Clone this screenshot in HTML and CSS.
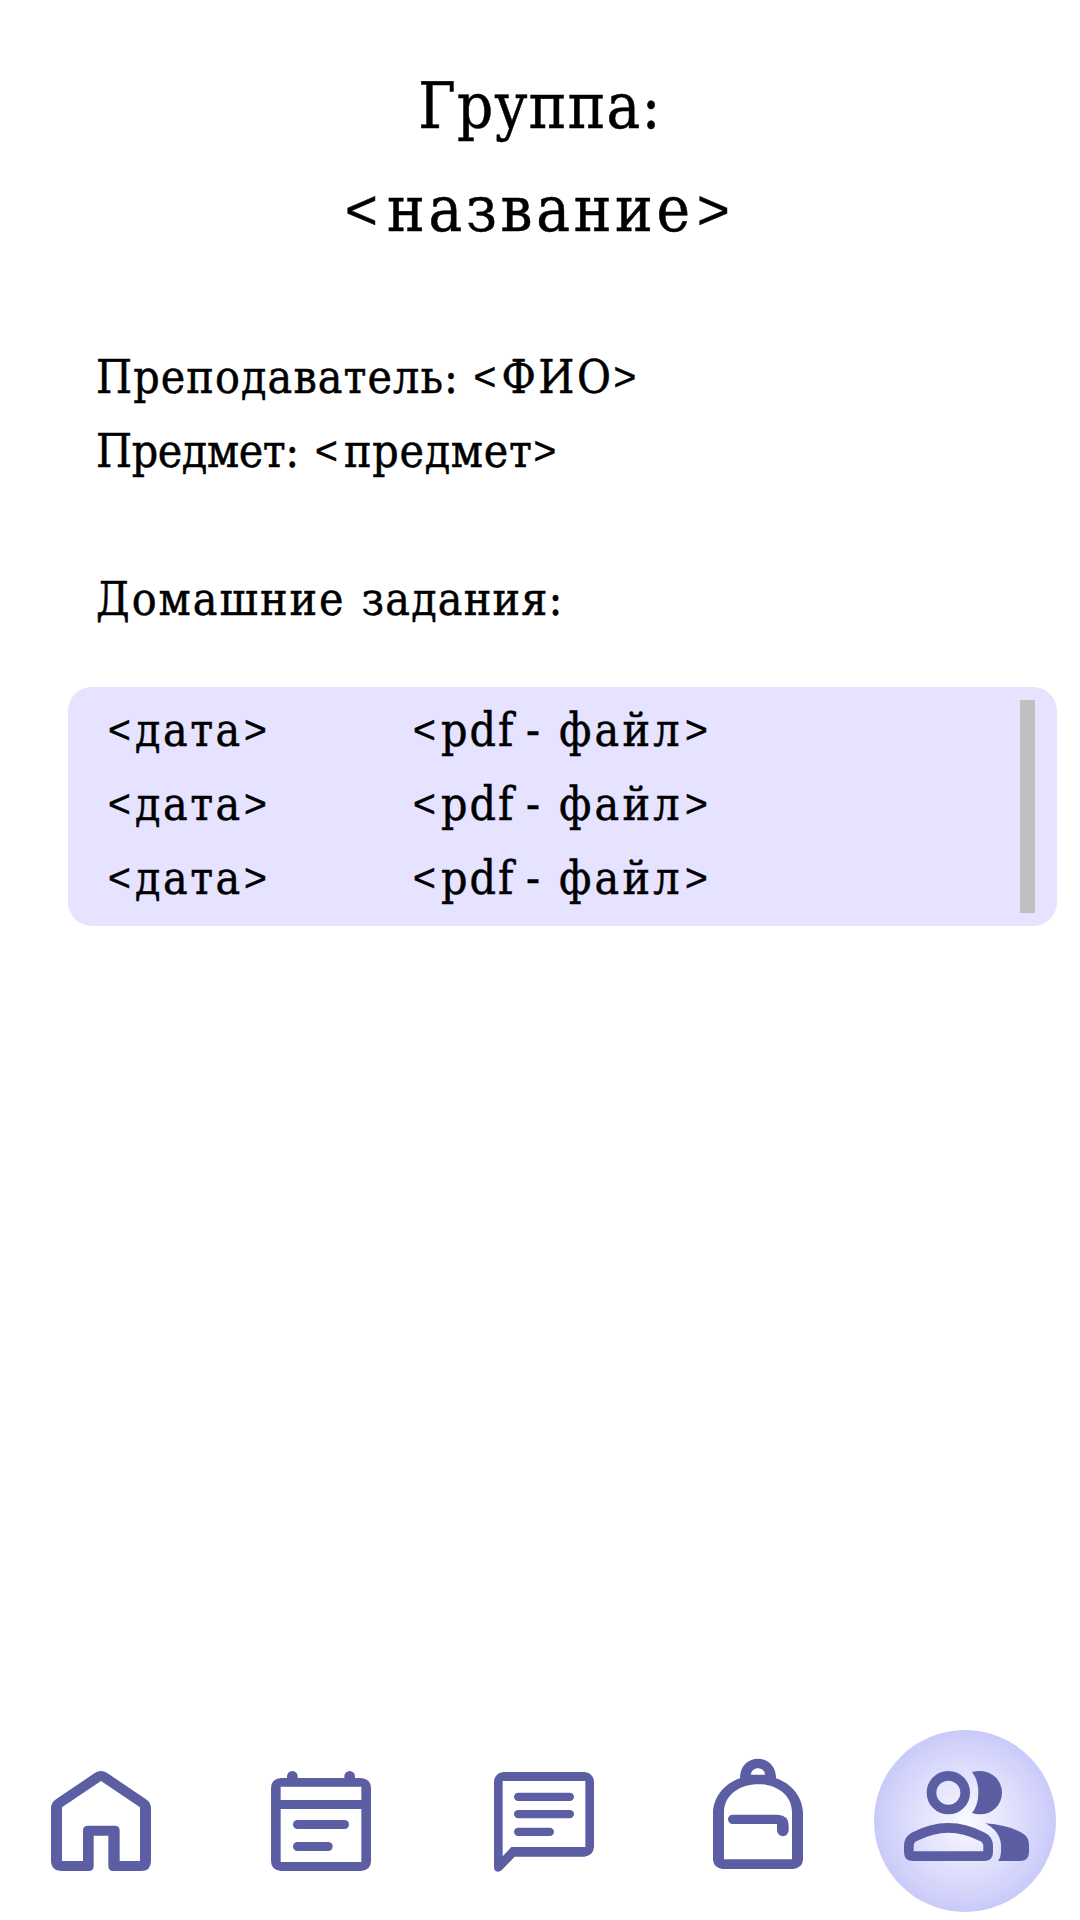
FILE: index.html
```
<!DOCTYPE html>
<html lang="ru">
<head>
<meta charset="utf-8">
<title>Группа</title>
<link rel="stylesheet" href="styles.css">
</head>
<body>
<main class="content">
  <h1 class="title">
    <span class="title-line"><span class="title-label">Группа:</span></span>
    <span class="title-line"><span class="chev">&lt;</span><span class="title-name">название</span><span class="chev">&gt;</span></span>
  </h1>
  <section class="info">
    <p class="line"><span class="teacher-label">Преподаватель:</span><span class="chev">&lt;</span><span class="teacher-name">ФИО</span><span class="chev">&gt;</span></p>
    <p class="line"><span class="subject-label">Предмет:</span><span class="chev">&lt;</span><span class="subject-name">предмет</span><span class="chev">&gt;</span></p>
  </section>
  <h2 class="line homework-title"><span class="homework-first">Домашние</span><span class="homework-second">задания:</span></h2>
  <section class="card">
    <ul class="list">
      <li class="line"><span class="date"><span class="chev">&lt;</span><span class="date-text">дата</span><span class="chev">&gt;</span></span><span class="chev">&lt;</span><span class="pdf">pdf</span><span class="dash">-</span><span class="file">файл</span><span class="chev">&gt;</span></li>
      <li class="line"><span class="date"><span class="chev">&lt;</span><span class="date-text">дата</span><span class="chev">&gt;</span></span><span class="chev">&lt;</span><span class="pdf">pdf</span><span class="dash">-</span><span class="file">файл</span><span class="chev">&gt;</span></li>
      <li class="line"><span class="date"><span class="chev">&lt;</span><span class="date-text">дата</span><span class="chev">&gt;</span></span><span class="chev">&lt;</span><span class="pdf">pdf</span><span class="dash">-</span><span class="file">файл</span><span class="chev">&gt;</span></li>
    </ul>
    <div class="scrollbar"></div>
  </section>
</main>
<nav class="nav">
  <svg class="icon" viewBox="0 -60 390 546"><path fill-rule="evenodd" d="M163 70Q183 56 203 70L318 148Q333 158 333 175V333Q333 363 303 363H220Q205 363 205 348V257H161V348Q161 363 146 363H66Q33 363 33 330V175Q33 158 48 148ZM183 93L300 172V333H239V242Q239 227 224 227H144Q129 227 129 242V333H66V172Z"/></svg>
  <svg class="icon" viewBox="0 -60 390 546"><path fill-rule="evenodd" d="M81 84V79A16 16 0 0 1 113 79V84H253V79A16 16 0 0 1 285 79V84H303Q333 87 333 114V333Q333 360 303 363H63Q33 360 33 333V114Q33 87 63 84ZM62 110V150H304V110ZM62 177V336H304V177Z"/><rect x="99" y="210" width="168" height="27" rx="13.5"/><rect x="99" y="276" width="119" height="27" rx="13.5"/></svg>
  <svg class="icon" viewBox="0 -60 390 546"><path fill-rule="evenodd" d="M70 66H314Q339 69 342 94V292Q339 317 314 320H104L65 361Q55 369 46 362Q42 359 42 352V94Q45 69 70 66ZM68 93V319L94 291H316V93Z"/><rect x="102" y="128" width="180" height="25" rx="12.5"/><rect x="102" y="180" width="180" height="25" rx="12.5"/><rect x="102" y="233" width="120" height="25" rx="12.5"/></svg>
  <svg class="icon icon-bag" viewBox="0 -60 360 546"><path fill-rule="evenodd" d="M120 85C119 7 229 7 228 85C277 101 309 145 309 190V330Q306 354 280 357H68Q42 354 39 330V190C39 145 71 101 120 85ZM153 74H195C195 48 153 48 153 74ZM72 328H276V188C276 74 72 74 72 188Z"/><path d="M98 194H234Q266 196 266 226V241A17.500 17.500 0 0 1 231 241V222H98A14 14 0 0 1 98 194Z"/></svg>
  <svg class="icon-active" viewBox="42 30 546 546">
    <defs><radialGradient id="glow"><stop offset="0" stop-color="#fafaff"/><stop offset="1" stop-color="#cacafa"/></radialGradient></defs>
    <circle cx="315" cy="303" r="273" fill="url(#glow)"/>
    <circle class="head" cx="265" cy="218" r="50.5"/>
    <path d="M336 156Q348 153 361 153A65 65 0 0 1 361 283Q348 283 336 279Q355 255 355 218Q355 180 336 156Z"/>
    <path fill-rule="evenodd" d="M132 378Q132 350 155 338Q210 309 265 309Q320 309 375 338Q399 350 399 378V396Q399 423 372 423H159Q132 423 132 396ZM161 394V378Q161 366 172 362Q222 338 265 338Q310 338 358 362Q370 366 370 378V394Z"/>
    <path d="M376 310Q450 316 490 341Q507 352 507 376V396Q507 423 480 423H415Q423 410 423 396V375Q420 333 376 310Z"/>
  </svg>
</nav>
</body>
</html>
```
FILE: styles.css
```
* { box-sizing: border-box; margin: 0; padding: 0; }

body {
  width: 1080px;
  height: 1920px;
  display: flex;
  flex-direction: column;
  justify-content: space-between;
  background: #fff;
  color: #000;
  font-family: "DejaVu Serif Condensed", "DejaVu Serif", serif;
  font-size: 46px;
  -webkit-text-stroke: 0.5px #000;
}

.content { padding-top: 55px; }

h1, h2 { font-weight: 400; font-size: inherit; }

.title { font-size: 63px; line-height: 103px; }
.title-line { display: flex; justify-content: center; align-items: center; }
.title-label { letter-spacing: 1.1px; }
.title-name { width: 314px; padding-left: 4px; letter-spacing: 3.7px; }
.title .chev { width: 38px; font-size: 56px; }

.line {
  display: flex;
  align-items: center;
  height: 74px;
  line-height: 74px;
  white-space: nowrap;
}

.chev {
  flex: none;
  width: 26px;
  font-family: "Liberation Sans", sans-serif;
  font-size: 39px;
  letter-spacing: 0;
}

.info { padding: 79px 0 0 96px; }
.teacher-label { width: 377.5px; letter-spacing: 1.1px; }
.teacher-name { width: 114px; padding-left: 2px; letter-spacing: 2.5px; }
.subject-label { width: 219px; letter-spacing: -0.4px; }
.subject-name { width: 192.5px; padding-left: 3px; letter-spacing: 0.7px; }

.homework-title { margin: 74px 0 0 96px; }
.homework-first { width: 265.5px; letter-spacing: 2px; }
.homework-second { letter-spacing: 1.2px; }

.card {
  display: flex;
  justify-content: space-between;
  align-items: flex-start;
  width: 989px;
  height: 239px;
  margin: 51px 0 0 68px;
  padding: 6px 22px 0 40px;
  border-radius: 24px;
  background: #e5e3ff;
}

.list { list-style: none; }
.date { display: flex; align-items: center; width: 305px; }
.date-text { width: 110px; padding-left: 1px; letter-spacing: 2.5px; }
.pdf { width: 87px; padding-left: 2px; letter-spacing: 2px; }
.dash { width: 31px; }
.file { width: 128px; padding-left: 2px; letter-spacing: 3.2px; }

.scrollbar {
  width: 15px;
  height: 213px;
  margin-top: 7px;
  background: #c0c0c0;
}

.nav {
  display: flex;
  gap: 90px;
  padding: 0 0 8px 40px;
}

.nav svg { flex: none; display: block; fill: #5b5ea2; }
.icon { width: 130px; height: 182px; }
.icon-bag { width: 120px; }
.icon-active { width: 182px; height: 182px; margin-left: -36px; }
.nav .head { fill: none; stroke: #5b5ea2; stroke-width: 29; }
```
